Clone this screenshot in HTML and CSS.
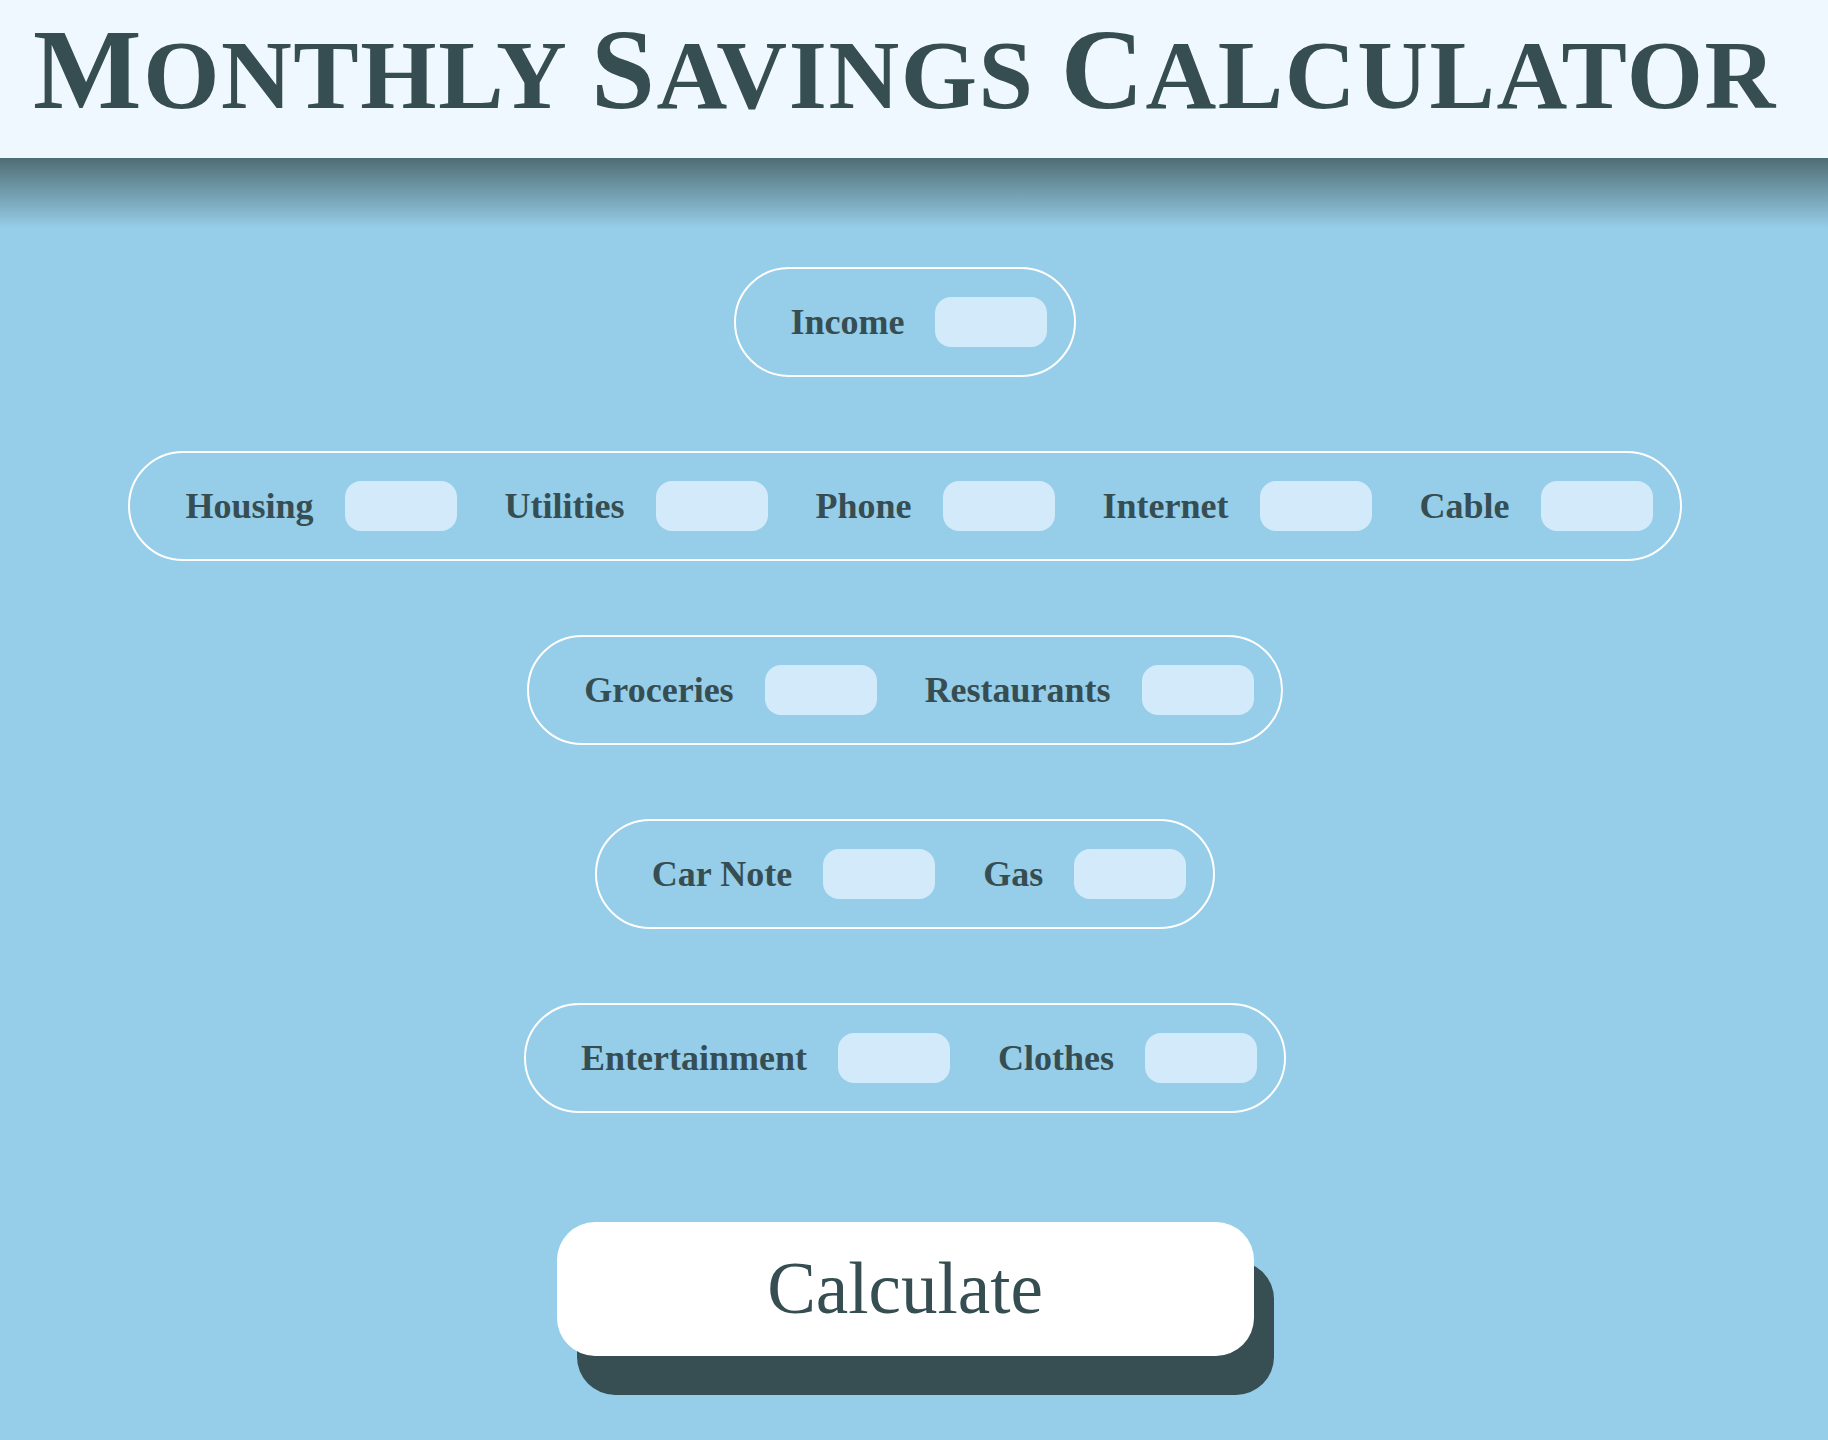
FILE: index.html
```html
<!DOCTYPE html>
<html lang="en">
<head>
<meta charset="utf-8">
<title>Monthly Savings Calculator</title>
<link rel="stylesheet" href="styles.css">
</head>
<body>
<header class="site-header">
  <h1 class="title"><span class="big">M</span>onthly <span class="big">S</span>avings <span class="big">C</span>alculator</h1>
</header>
<main class="calculator">
  <div class="pill">
    <div class="field"><label class="label" for="income">Income</label><input class="box" id="income" type="text"></div>
  </div>
  <div class="pill">
    <div class="field"><label class="label" for="housing">Housing</label><input class="box" id="housing" type="text"></div>
    <div class="field"><label class="label" for="utilities">Utilities</label><input class="box" id="utilities" type="text"></div>
    <div class="field"><label class="label" for="phone">Phone</label><input class="box" id="phone" type="text"></div>
    <div class="field"><label class="label" for="internet">Internet</label><input class="box" id="internet" type="text"></div>
    <div class="field"><label class="label" for="cable">Cable</label><input class="box" id="cable" type="text"></div>
  </div>
  <div class="pill">
    <div class="field"><label class="label" for="groceries">Groceries</label><input class="box" id="groceries" type="text"></div>
    <div class="field"><label class="label" for="restaurants">Restaurants</label><input class="box" id="restaurants" type="text"></div>
  </div>
  <div class="pill">
    <div class="field"><label class="label" for="carnote">Car Note</label><input class="box" id="carnote" type="text"></div>
    <div class="field"><label class="label" for="gas">Gas</label><input class="box" id="gas" type="text"></div>
  </div>
  <div class="pill">
    <div class="field"><label class="label" for="entertainment">Entertainment</label><input class="box" id="entertainment" type="text"></div>
    <div class="field"><label class="label" for="clothes">Clothes</label><input class="box" id="clothes" type="text"></div>
  </div>
  <button class="calc-btn" type="button">Calculate</button>
</main>
</body>
</html>
```
FILE: styles.css
```css
html, body {
  margin: 0;
  padding: 0;
}

body {
  background: #96cde9;
  color: #364e52;
  font-family: "Liberation Serif", "Times New Roman", serif;
  min-height: 100vh;
}

.site-header {
  background: #f0f8ff;
  height: 158px;
  box-sizing: border-box;
  padding: 12px 18px 0 0;
}

.title {
  margin: 0;
  text-align: center;
  font-size: 98px;
  line-height: 1;
  font-weight: 700;
  letter-spacing: 1.6px;
  text-transform: uppercase;
  color: #364e52;
  white-space: nowrap;
}

.title .big {
  font-size: 115px;
}

.calculator {
  background: linear-gradient(to bottom, #4f6d74 0, #96cde9 70px);
  display: flex;
  flex-direction: column;
  align-items: center;
  gap: 74px;
  padding: 109px 18px 40px 0;
}

.pill {
  display: flex;
  align-items: center;
  gap: 48px;
  height: 110px;
  box-sizing: border-box;
  border: 2px solid #ffffff;
  border-radius: 60px;
  padding: 0 27px 0 55px;
}

.field {
  display: flex;
  align-items: center;
  gap: 31px;
}

.label {
  font-size: 36px;
  font-weight: 700;
  color: #364e52;
  white-space: nowrap;
}

.box {
  width: 112px;
  height: 50px;
  box-sizing: border-box;
  border: none;
  border-radius: 16px;
  background: #d3eafa;
  padding: 0 10px;
  margin: 0;
  font-family: inherit;
  font-size: 24px;
  color: #364e52;
}

.calc-btn {
  margin-top: 35px;
  width: 697px;
  height: 134px;
  border: none;
  border-radius: 38px;
  background: #ffffff;
  box-shadow: 20px 39px 0 #374e52;
  font-family: "Liberation Serif", "Times New Roman", serif;
  font-size: 73px;
  font-weight: 400;
  color: #364e52;
  padding: 0;
  cursor: pointer;
}
```
